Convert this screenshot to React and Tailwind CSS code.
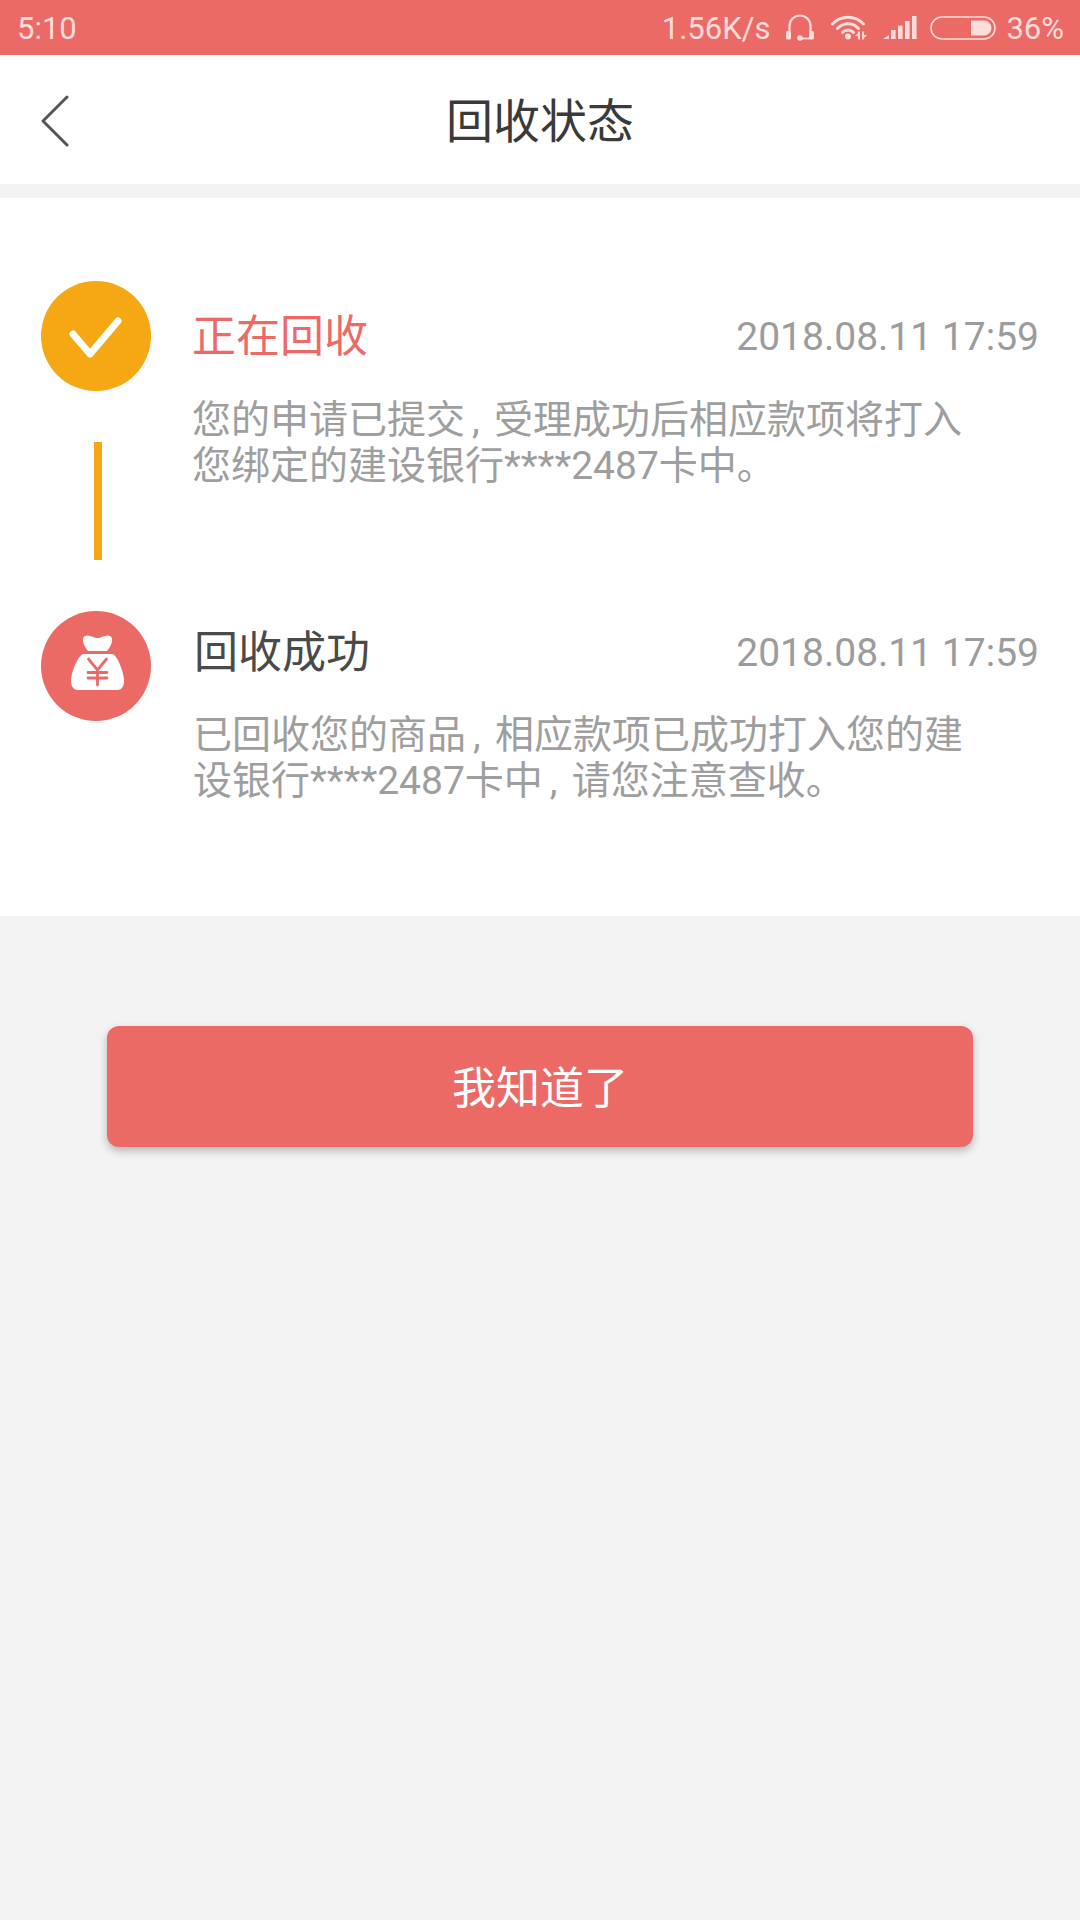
import React from 'react';

const cjk = "font-['Roboto','Noto_Sans_CJK_SC',sans-serif]";

function Headset() {
  return (
    <svg width="28" height="26" viewBox="0 0 28 26" fill="none" stroke="#fddcdc" strokeWidth="2.2" className="overflow-visible">
      <path d="M3.5 17V11a10.5 10.5 0 0 1 21 0v6" />
      <rect x="0" y="16" width="5" height="8.5" rx="1.6" fill="#fddcdc" stroke="none" />
      <rect x="23" y="16" width="5" height="8.5" rx="1.6" fill="#fddcdc" stroke="none" />
      <path d="M14 23.5h10" strokeWidth="1.8" />
      <circle cx="14" cy="23" r="2.8" fill="#fddcdc" stroke="none" />
    </svg>
  );
}

function Wifi() {
  return (
    <svg width="36" height="25" viewBox="0 0 36 25" fill="none" stroke="#fddcdc" strokeWidth="3" strokeLinecap="round">
      <path d="M1.5 9a21 21 0 0 1 31 0" />
      <path d="M6.5 13.5a14 14 0 0 1 21 0" />
      <path d="M11.5 17.5a7.5 7.5 0 0 1 11 0" />
      <circle cx="17" cy="21.5" r="3" fill="#fddcdc" stroke="none" />
      <path d="M28 16.5v8M32 16.5v8" strokeWidth="1.8" strokeLinecap="butt" />
      <path d="M28 17l-4 4h4zM32 24l4-4h-4z" fill="#fddcdc" stroke="none" />
    </svg>
  );
}

function Signal() {
  return (
    <svg width="34" height="23" viewBox="0 0 34 23" fill="#fddcdc">
      <path d="M0 23l6-4v4z" />
      <rect x="8" y="14" width="4.6" height="9" />
      <rect x="15" y="9.5" width="4.6" height="13.5" />
      <rect x="22" y="5" width="4.6" height="18" />
      <rect x="29" y="0" width="4.6" height="23" />
    </svg>
  );
}

function Battery() {
  return (
    <svg width="66" height="24" viewBox="0 0 66 24" fill="none">
      <rect x="1" y="1" width="64" height="22" rx="11" stroke="#fddcdc" strokeWidth="1.6" />
      <path d="M41 4.5h13a7.5 7.5 0 0 1 0 15H41z" fill="#fddcdc" />
    </svg>
  );
}

function MoneyBag() {
  return (
    <svg width="53" height="55" viewBox="0 0 53 55" className="mb-[8px] ml-[3px]">
      <path d="M14 1C18-1 23 3 26.5 3S35-1 39 1C43 3 41 10 36 16H17C12 10 10 3 14 1z" fill="#fff" />
      <path d="M12 19H42C47 22 53 38 53 46 53 52 50 55 46 55H7C3 55 0 52 0 46 0 38 6 22 12 19z" fill="#fff" />
      <path d="M17.5 24l9 11 9-11M17 37.5h19M17 43h19M26.5 35v15" fill="none" stroke="#ec6a66" strokeWidth="2.8" strokeLinecap="round" />
    </svg>
  );
}

// the comma in the screenshot is narrower than a full-width one
function DescLine({ text }) {
  const parts = text.split('，');
  return (
    <div>
      {parts.map((p, i) => (
        <React.Fragment key={p}>
          {i > 0 && <span className="inline-block w-[29px] text-left pl-[7px]">,</span>}
          {p}
        </React.Fragment>
      ))}
    </div>
  );
}

function StatusStep({ icon, title, titleClass, lines, rowClass, descClass, bodyClass }) {
  return (
    <div className="flex">
      {icon}
      <div className={`flex-1 ${bodyClass}`}>
        <div className={`flex items-center justify-between ${rowClass}`}>
          <span className={`text-[44px] leading-[52px] ${titleClass}`}>{title}</span>
          <span className="text-[39px] leading-[52px] text-[#9c9c9c] font-['Roboto']">2018.08.11 17:59</span>
        </div>
        <div className={`text-[39px] leading-[46px] text-[#9e9e9e] ${descClass}`}>
          {lines.map((l) => <DescLine key={l} text={l} />)}
        </div>
      </div>
    </div>
  );
}

export default function App() {
  return (
    <div className={`${cjk} w-[1080px] min-h-[1920px] bg-[#f3f3f3]`}>
      <div className="h-[55px] bg-[#ec6a66] flex items-center justify-between pl-[17px] pr-[16px] text-[#fddcdc] text-[31px]">
        <span className="pt-[3px]">5:10</span>
        <div className="flex items-center">
          <span className="pt-[3px]">1.56K/s</span>
          <span className="ml-[16px]"><Headset /></span>
          <span className="ml-[17px]"><Wifi /></span>
          <span className="ml-[16px]"><Signal /></span>
          <span className="ml-[13px]"><Battery /></span>
          <span className="ml-[10px] pt-[3px]">36%</span>
        </div>
      </div>

      <div className="h-[129px] bg-white relative flex items-center justify-center">
        <svg className="absolute left-[40px] top-[40px]" width="30" height="52" viewBox="0 0 30 52" fill="none" stroke="#555" strokeWidth="3" strokeLinecap="round" strokeLinejoin="round">
          <path d="M27 2L3 26l24 24" />
        </svg>
        <span className="text-[47px] text-[#3a3a3a] leading-none pt-[4px]">回收状态</span>
      </div>

      <div className="mt-[14px] h-[718px] bg-white pl-[41px] pr-[41px] pt-[83px]">
        <StatusStep
          icon={
            <div className="w-[110px] h-[110px] rounded-full bg-[#f6a714] flex items-center justify-center shrink-0">
              <svg width="56" height="40" viewBox="0 0 56 40" fill="none" stroke="#fff" strokeWidth="7" strokeLinecap="round" strokeLinejoin="round" className="overflow-visible">
                <path d="M5 18l17 20L50 5" />
              </svg>
            </div>
          }
          title="正在回收"
          titleClass="text-[#ec6a66]"
          lines={['您的申请已提交，受理成功后相应款项将打入', '您绑定的建设银行****2487卡中。']}
          bodyClass="ml-[41px]"
          rowClass="h-[110px] pt-[2px]"
          descClass="mt-[6px]"
        />
        <div className="w-[8px] h-[118px] bg-[#f6a714] ml-[53px] -mt-[47px]" />
        <div className="mt-[51px]">
          <StatusStep
            icon={
              <div className="w-[110px] h-[110px] rounded-full bg-[#ec6a66] flex items-center justify-center shrink-0">
                <MoneyBag />
              </div>
            }
            title="回收成功"
            titleClass="text-[#4a4a4a] pl-[1px]"
            lines={['已回收您的商品，相应款项已成功打入您的建', '设银行****2487卡中，请您注意查收。']}
            bodyClass="ml-[42px]"
            rowClass="h-[84px]"
            descClass="mt-[17px]"
          />
        </div>
      </div>

      <div className="mt-[110px] mx-[107px] h-[121px] rounded-[12px] bg-[#ec6a66] shadow-[0_4px_8px_rgba(0,0,0,0.25)] flex items-center justify-center text-white text-[44px] pt-[4px]">
        我知道了
      </div>
    </div>
  );
}
